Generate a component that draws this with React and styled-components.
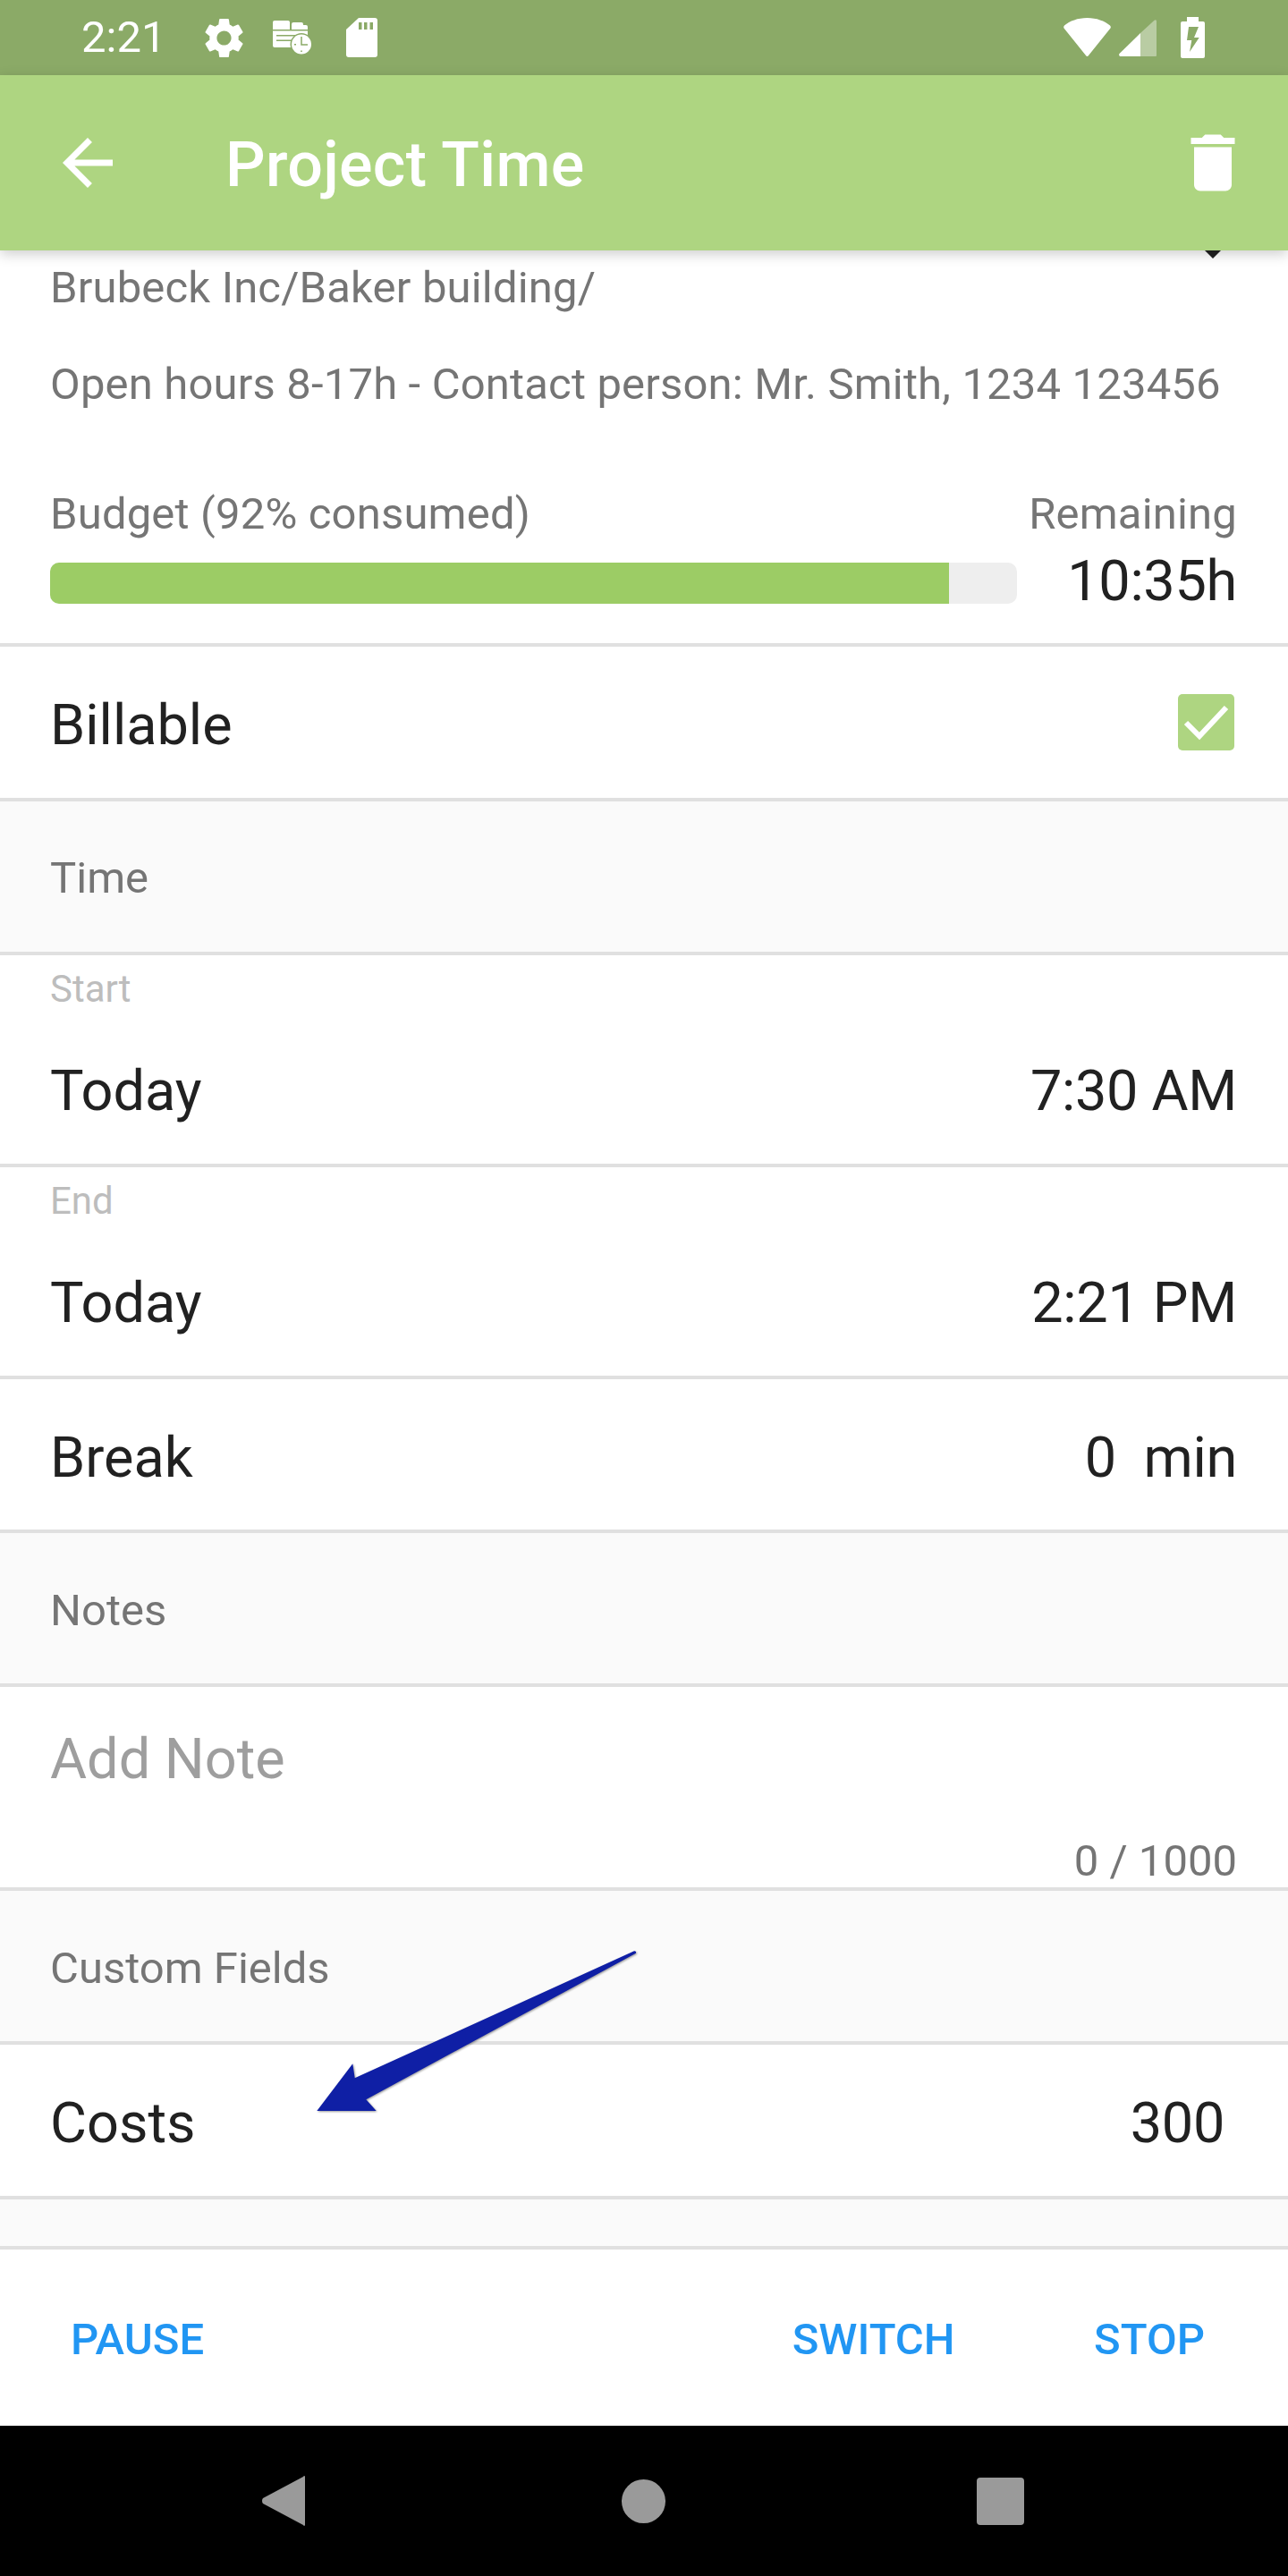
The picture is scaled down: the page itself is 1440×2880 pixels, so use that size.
import styled, { createGlobalStyle } from "styled-components";

const GlobalStyle = createGlobalStyle`
  html, body {
    margin: 0;
    padding: 0;
    background: #fff;
  }
  body {
    font-family: Roboto, "Liberation Sans", sans-serif;
    color: #212121;
  }
`;

export default function App() {
  return (
    <Page>
      <GlobalStyle />
      <StatusBar>
        <StatusTime>2:21</StatusTime>
        <StatusIcon $left={44} width="43" height="45" viewBox="2.7 2 18.6 20">
          <path d="M19.14 12.94c.04-.3.06-.61.06-.94 0-.32-.02-.64-.07-.94l2.03-1.58c.18-.14.23-.41.12-.61l-1.92-3.32c-.12-.22-.37-.29-.59-.22l-2.39.96c-.5-.38-1.03-.7-1.62-.94l-.36-2.54c-.04-.24-.24-.41-.48-.41h-3.84c-.24 0-.43.17-.47.41l-.36 2.54c-.59.24-1.13.57-1.62.94l-2.39-.96c-.22-.08-.47 0-.59.22L2.74 8.87c-.12.21-.08.47.12.61l2.03 1.58c-.05.3-.09.63-.09.94s.02.64.07.94l-2.03 1.58c-.18.14-.23.41-.12.61l1.92 3.32c.12.22.37.29.59.22l2.39-.96c.5.38 1.03.7 1.62.94l.36 2.54c.05.24.24.41.48.41h3.84c.24 0 .44-.17.47-.41l.36-2.54c.59-.24 1.13-.56 1.62-.94l2.39.96c.22.08.47 0 .59-.22l1.92-3.32c.12-.22.07-.47-.12-.61l-2.01-1.58zM12 15.6c-1.98 0-3.6-1.62-3.6-3.6s1.62-3.6 3.6-3.6 3.6 1.62 3.6 3.6-1.62 3.6-3.6 3.6z" />
        </StatusIcon>
        <StatusIcon $left={33} width="44" height="39" viewBox="0 0 44 39">
          <path d="M2 0h15a2 2 0 0 1 2 2v8H0V2a2 2 0 0 1 2-2z" />
          <path d="M23 2h9a2 2 0 0 1 2 2v1h3a2 2 0 0 1 2 2v3H21V4a2 2 0 0 1 2-2z" />
          <path d="M0 11.500h39V28a2 2 0 0 1-2 2H2a2 2 0 0 1-2-2z" />
          <path d="M4 16h27v1.500H4zM4 21.500h20V23H4z" fill="#8baa67" />
          <circle cx="32" cy="26.500" r="12.500" fill="#8baa67" />
          <circle cx="32" cy="26.500" r="11" />
          <path d="M32 18v9h7" fill="none" stroke="#8baa67" strokeWidth="1.500" />
          <path d="M24 26h2v1.500h-2zM31.200 33.500h1.600v1.600h-1.600z" fill="#8baa67" />
        </StatusIcon>
        <StatusIcon $left={38} width="35" height="44" viewBox="0 0 35 44">
          <path d="M0 13L14 0h18a3 3 0 0 1 3 3v38a3 3 0 0 1-3 3H3a3 3 0 0 1-3-3z" />
          <path d="M14 5h3.500v8H14zM20 5h3.500v8H20zM26.500 5H30v8h-3.500z" fill="#8baa67" />
        </StatusIcon>
        <StatusRight>
          <StatusIcon $top={-2} width="53" height="43" viewBox="0 0 53 43">
            <path d="M26.500 0C16 0 7 3.500 1 8.500c-1 1-1 2-.5 3L25 42c.8 1.200 2.200 1.200 3 0l24.500-30.500c.5-1 .5-2-.5-3C46 3.500 37 0 26.500 0z" />
          </StatusIcon>
          <StatusIcon $left={9} width="42" height="41" viewBox="0 0 42 41">
            <path d="M24 15L39.500.8c1-1 2.500-.8 2.500 1V40c0 .5-.5 1-1 1H24z" opacity="0.4" />
            <path d="M24 15v26H2c-1.500 0-2.500-1.500-1.500-3z" />
          </StatusIcon>
          <StatusIcon $left={27} width="27" height="46" viewBox="0 0 27 46">
            <path d="M7 0h13v5h5a2 2 0 0 1 2 2v37a2 2 0 0 1-2 2H2a2 2 0 0 1-2-2V7a2 2 0 0 1 2-2h5z" />
            <path d="M9 11h11l-5 12h5.700L10 39l2.300-13H7z" fill="#8baa67" />
          </StatusIcon>
        </StatusRight>
      </StatusBar>

      <AppBar>
        <ToolIcon viewBox="0 0 24 24">
          <path d="M20 11H7.830l5.590-5.590L12 4l-8 8 8 8 1.410-1.410L7.830 13H20v-2z" />
        </ToolIcon>
        <Title>Project Time</Title>
        <ToolIcon viewBox="0 0 24 24">
          <path d="M6 19c0 1.100.9 2 2 2h8c1.100 0 2-.9 2-2V7H6v12zM19 4h-3.500l-1-1h-5l-1 1H5v2h14V4z" />
        </ToolIcon>
      </AppBar>

      <Content>
        <InfoBlock>
          <Caret />
          <InfoLine>Brubeck Inc/Baker building/</InfoLine>
          <InfoLine $top={47.5}>Open hours 8-17h - Contact person: Mr. Smith, 1234 123456</InfoLine>
          <BudgetGrid>
            <div>
              <InfoLine>Budget (92% consumed)</InfoLine>
              <BudgetTrack>
                <BudgetFill style={{ width: `${(1005 / 1081) * 100}%` }} />
              </BudgetTrack>
            </div>
            <BudgetRemaining>
              <InfoLine>Remaining</InfoLine>
              <BudgetValue>10:35h</BudgetValue>
            </BudgetRemaining>
          </BudgetGrid>
        </InfoBlock>

        <Row>
          <RowText>Billable</RowText>
          <Checkbox>
            <svg width="63" height="63" viewBox="0 0 63 63">
              <path d="M9 32l15 15L54 15" fill="none" stroke="#fff" strokeWidth="6" />
            </svg>
          </Checkbox>
        </Row>

        <SectionHeader>Time</SectionHeader>

        <DateRow>
          <SmallLabel>Start</SmallLabel>
          <DateLine>
            <RowText>Today</RowText>
            <RowText $value>7:30 AM</RowText>
          </DateLine>
        </DateRow>
        <DateRow>
          <SmallLabel>End</SmallLabel>
          <DateLine>
            <RowText>Today</RowText>
            <RowText $value>2:21 PM</RowText>
          </DateLine>
        </DateRow>

        <Row>
          <RowText>Break</RowText>
          <RowText $value>0&nbsp; min</RowText>
        </Row>

        <SectionHeader>Notes</SectionHeader>

        <NoteRow>
          <NotePlaceholder>Add Note</NotePlaceholder>
          <NoteCounter>0 / 1000</NoteCounter>
        </NoteRow>

        <SectionHeader>Custom Fields</SectionHeader>

        <Row $inset={71}>
          <RowText>Costs</RowText>
          <RowText $value>300</RowText>
        </Row>

        <EmptyStrip />
      </Content>

      <Footer>
        <FooterButton>PAUSE</FooterButton>
        <FooterRight>
          <FooterButton>SWITCH</FooterButton>
          <FooterButton>STOP</FooterButton>
        </FooterRight>
      </Footer>

      <NavBar>
        <NavIcon $left={293} width="48" height="56" viewBox="0 0 48 56">
          <path d="M48 1.500c0-1.500-1-2-2-.5L1 25c-1.300 1.500-1.300 4.500 0 6l45 24c1 1.500 2 1 2-.5z" />
        </NavIcon>
        <NavIcon $left={354} width="49" height="49" viewBox="0 0 49 49">
          <circle cx="24.500" cy="24.500" r="24.500" />
        </NavIcon>
        <NavIcon $left={348} width="53" height="53" viewBox="0 0 53 53">
          <rect width="53" height="53" rx="4" />
        </NavIcon>
      </NavBar>

      <AnnotationArrow width="500" height="240" viewBox="0 0 500 240">
        <path d="M408.500 41.500L96.700 183.300l-2.400-16L54.300 220h66.400l-11.400-12.700L410.500 44c1.500-1 .2-3.300-2-2.500z" />
      </AnnotationArrow>
    </Page>
  );
}

const Page = styled.div`
  position: relative;
  width: 1440px;
  height: 2880px;
  display: flex;
  flex-direction: column;
  overflow: hidden;
  background: #fff;
`;

const StatusBar = styled.div`
  flex: none;
  height: 84px;
  display: flex;
  align-items: center;
  padding: 0 93px 0 91px;
  box-sizing: border-box;
  background: #8baa67;
  color: #fff;
`;

const StatusTime = styled.span`
  font-size: 49px;
  line-height: 84px;
`;

const StatusIcon = styled.svg`
  flex: none;
  margin-left: ${(p) => p.$left || 0}px;
  margin-top: ${(p) => p.$top || 0}px;
  fill: #fff;
`;

const StatusRight = styled.div`
  margin-left: auto;
  display: flex;
  align-items: center;
`;

const AppBar = styled.header`
  position: relative;
  z-index: 2;
  flex: none;
  height: 196px;
  display: flex;
  align-items: center;
  padding: 0 42px 0 56px;
  background: #aed581;
  box-shadow: 0 4px 14px rgba(0, 0, 0, 0.2);
`;

const ToolIcon = styled.svg`
  flex: none;
  width: 84px;
  height: 84px;
  fill: #fff;
`;

const Title = styled.h1`
  flex: 1;
  margin: 4px 0 0 112px;
  font-size: 70px;
  font-weight: 500;
  line-height: 84px;
  letter-spacing: 0.3px;
  color: #fff;
`;

const Content = styled.main`
  flex: 1;
  min-height: 0;
  display: flex;
  flex-direction: column;
`;

const InfoBlock = styled.section`
  position: relative;
  height: 443px;
  box-sizing: border-box;
  padding: 12px 57px 0 56px;
  border-bottom: 4px solid #e0e0e0;
`;

const Caret = styled.span`
  position: absolute;
  top: 0;
  right: 75px;
  border-left: 9px solid transparent;
  border-right: 9px solid transparent;
  border-top: 9px solid #212121;
`;

const InfoLine = styled.div`
  margin-top: ${(p) => p.$top || 0}px;
  font-size: 49px;
  line-height: 60px;
  letter-spacing: 0.17px;
  color: #757575;
  white-space: nowrap;
`;

const BudgetGrid = styled.div`
  display: grid;
  grid-template-columns: 1081px 1fr;
  margin-top: 85px;
`;

const BudgetTrack = styled.div`
  height: 46px;
  margin-top: 24.5px;
  border-radius: 10px;
  overflow: hidden;
  background: #eeeeee;
`;

const BudgetFill = styled.div`
  height: 100%;
  background: #9ccc65;
`;

const BudgetRemaining = styled.div`
  text-align: right;
`;

const BudgetValue = styled.div`
  margin-top: 10.5px;
  font-size: 63px;
  line-height: 70px;
  letter-spacing: -0.3px;
  color: #212121;
`;

const Row = styled.div`
  flex: none;
  height: 172.5px;
  box-sizing: border-box;
  display: flex;
  align-items: center;
  justify-content: space-between;
  padding: 8px ${(p) => p.$inset || 57}px 0 56px;
  border-bottom: 4px solid #e0e0e0;
`;

const RowText = styled.span`
  font-size: 63px;
  line-height: 76px;
  letter-spacing: ${(p) => (p.$value ? "-0.3px" : "0")};
  color: #212121;
  white-space: nowrap;
`;

const Checkbox = styled.span`
  flex: none;
  width: 63px;
  height: 63px;
  margin: -8px 3px 0 0;
  border-radius: 5px;
  background: #aed581;
`;

const SectionHeader = styled.div`
  flex: none;
  height: 172px;
  box-sizing: border-box;
  display: flex;
  align-items: center;
  padding: 4px 56px 0;
  font-size: 49px;
  color: #757575;
  background: #fafafa;
  border-bottom: 4px solid #e0e0e0;
`;

const DateRow = styled.div`
  flex: none;
  height: 237px;
  box-sizing: border-box;
  padding: 0 57px 0 56px;
  border-bottom: 4px solid #e0e0e0;
`;

const SmallLabel = styled.div`
  padding-top: 13px;
  font-size: 42px;
  line-height: 50px;
  color: #bdbdbd;
`;

const DateLine = styled.div`
  display: flex;
  justify-content: space-between;
  margin-top: 51px;
`;

const NoteRow = styled.div`
  flex: none;
  height: 228px;
  box-sizing: border-box;
  padding: 43px 57px 0 56px;
  border-bottom: 4px solid #e0e0e0;
`;

const NotePlaceholder = styled.div`
  font-size: 63px;
  line-height: 76px;
  color: #9e9e9e;
`;

const NoteCounter = styled.div`
  margin-top: 46px;
  font-size: 49px;
  line-height: 60px;
  text-align: right;
  color: #757575;
`;

const EmptyStrip = styled.div`
  flex: none;
  height: 56px;
  box-sizing: border-box;
  background: #fafafa;
  border-bottom: 4px solid #e0e0e0;
`;

const Footer = styled.footer`
  flex: none;
  height: 196px;
  display: flex;
  align-items: center;
  justify-content: space-between;
  padding: 2px 93px 0 79px;
  box-sizing: border-box;
  background: #fff;
`;

const FooterRight = styled.div`
  display: flex;
  gap: 155.5px;
`;

const FooterButton = styled.span`
  font-size: 49px;
  font-weight: 500;
  color: #2196f3;
`;

const NavBar = styled.nav`
  flex: none;
  height: 168px;
  display: flex;
  align-items: center;
  background: #000;
`;

const NavIcon = styled.svg`
  flex: none;
  margin-left: ${(p) => p.$left}px;
  fill: #9a9a9a;
`;

const AnnotationArrow = styled.svg`
  position: absolute;
  left: 300px;
  top: 2140px;
  z-index: 3;
  fill: #0f1fa5;
  filter: drop-shadow(1px 1px 1px rgba(0, 0, 0, 0.4));
`;
